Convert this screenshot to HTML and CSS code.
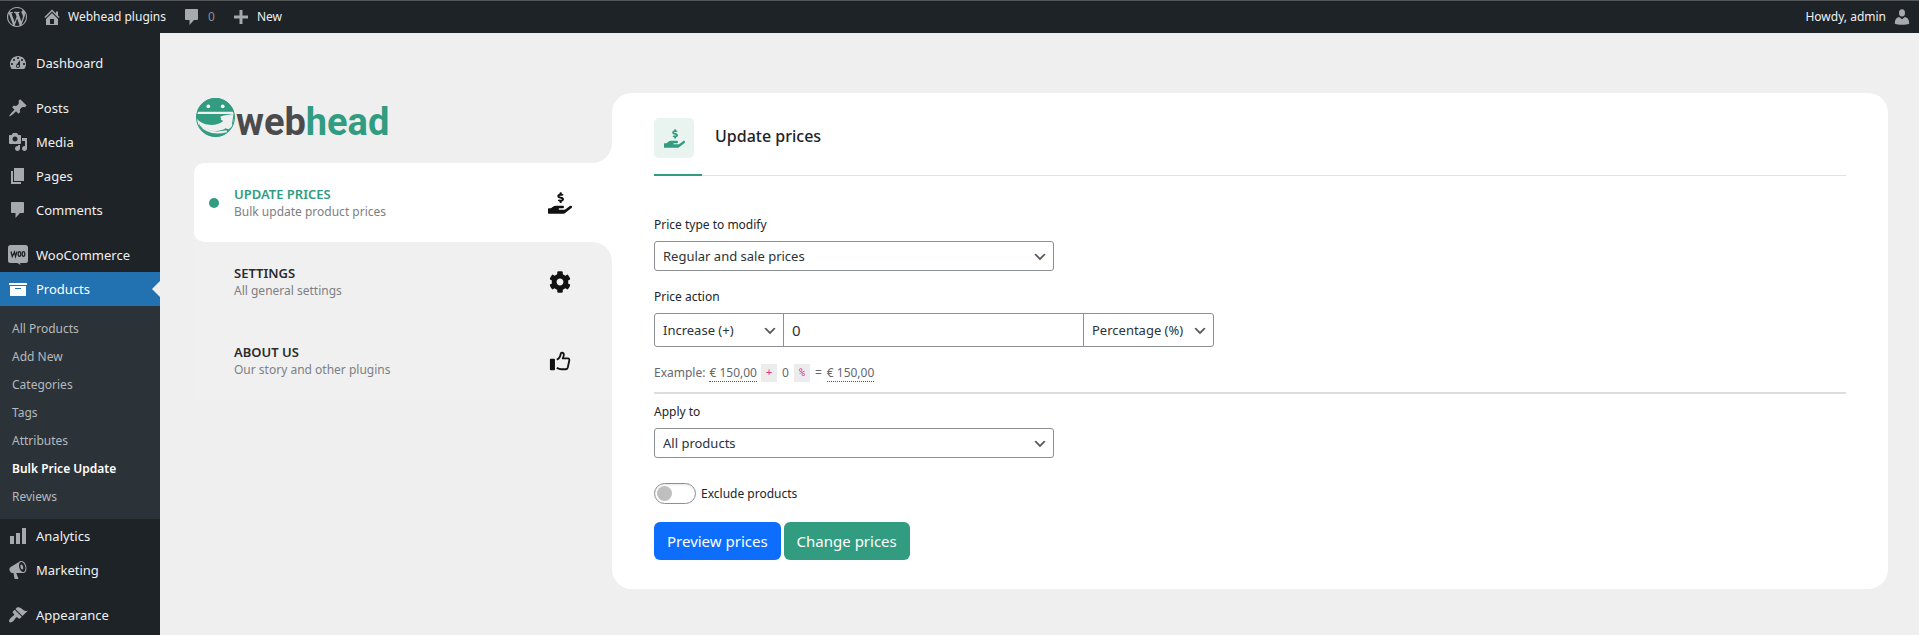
FILE: index.html
```html
<!DOCTYPE html>
<html lang="en">
<head>
<meta charset="utf-8">
<title>Bulk Price Update</title>
<link rel="stylesheet" href="styles.css">
</head>
<body>
<header class="adminbar">
  <a class="bar-item" href="#" aria-label="About WordPress"><svg class="icon" viewBox="0 0 20 20"><path d="M20 10c0-5.51-4.49-10-10-10C4.48 0 0 4.49 0 10c0 5.52 4.48 10 10 10 5.51 0 10-4.48 10-10zM7.78 15.37L4.37 6.22c.55-.02 1.17-.08 1.17-.08.5-.06.44-1.13-.06-1.11 0 0-1.45.11-2.37.11-.18 0-.37 0-.58-.01C4.12 2.69 6.87 1.11 10 1.11c2.33 0 4.45.87 6.05 2.34-.68-.11-1.65.39-1.65 1.58 0 .74.45 1.36.9 2.1.35.61.55 1.36.55 2.46 0 1.49-1.4 5-1.4 5l-3.03-8.37c.54-.02.82-.17.82-.17.5-.05.44-1.25-.06-1.22 0 0-1.44.12-2.38.12-.87 0-2.33-.12-2.33-.12-.5-.03-.56 1.2-.06 1.22l.92.08 1.26 3.41zM17.41 10c.24-.64.74-1.87.43-4.25.7 1.29 1.05 2.71 1.05 4.25 0 3.29-1.73 6.24-4.4 7.78.97-2.59 1.94-5.2 2.92-7.78zM6.1 18.09C3.12 16.65 1.11 13.53 1.11 10c0-1.3.23-2.48.72-3.59C3.25 10.3 4.67 14.2 6.1 18.09zm4.03-6.63l2.58 6.98c-.86.29-1.76.45-2.71.45-.79 0-1.57-.11-2.29-.33.81-2.38 1.62-4.74 2.42-7.1z"/></svg></a>
  <a class="bar-item" href="#"><svg class="icon" viewBox="0 0 20 20"><path fill-rule="evenodd" d="M16 8.5l1.53 1.53-1.06 1.06L10 4.6l-6.47 6.49-1.06-1.06L10 2.5l4 4v-2h2v4zm-6-2.46l6 5.99V18H4v-5.97zM12 17v-5H8v5h4z"/></svg>Webhead plugins</a>
  <a class="bar-item bar-count" href="#"><svg class="icon" viewBox="0 0 20 20"><path d="M4 2h11c.6 0 1 .4 1 1v9c0 .6-.4 1-1 1h-3l-4.500 5v-5H4c-.6 0-1-.4-1-1V3c0-.6.4-1 1-1z"/></svg>0</a>
  <a class="bar-item" href="#"><svg class="icon" viewBox="0 0 20 20"><path d="M17 8.500v3h-5.500V17h-3v-5.500H3v-3h5.500V3h3v5.500z"/></svg>New</a>
  <a class="bar-item bar-user" href="#">Howdy, admin<svg class="icon" viewBox="0 0 20 20"><ellipse cx="10" cy="5.500" rx="3.300" ry="4"/><path d="M2 17.500c0-4.500 1.500-7 4.800-7.500L10 12.500l3.200-2.500c3.300.5 4.800 3 4.800 7.500-4 1.500-12 1.500-16 0z"/></svg></a>
</header>

<div class="shell">
  <nav class="menu" aria-label="Main menu">
    <a class="menu-item" href="#"><svg class="icon" viewBox="0 0 20 20"><path fill-rule="evenodd" d="M3.76 16h12.48c1.1-1.37 1.76-3.11 1.76-5 0-4.42-3.58-8-8-8s-8 3.580-8 8c0 1.890.66 3.630 1.760 5zM10 4c.55 0 1 .45 1 1s-.45 1-1 1-1-.45-1-1 .45-1 1-1zM6 6c.55 0 1 .45 1 1s-.45 1-1 1-1-.45-1-1 .45-1 1-1zm8 0c.55 0 1 .45 1 1s-.45 1-1 1-1-.45-1-1 .45-1 1-1zm-5.370 5.550L12 7v6c0 1.100-.9 2-2 2s-2-.9-2-2c0-.57.24-1.080.63-1.450zM4 10c.55 0 1 .45 1 1s-.45 1-1 1-1-.45-1-1 .45-1 1-1zm12 0c.55 0 1 .45 1 1s-.45 1-1 1-1-.45-1-1 .45-1 1-1zm-5 3c0-.55-.45-1-1-1s-1 .45-1 1 .45 1 1 1 1-.45 1-1z"/></svg>Dashboard</a>
    <a class="menu-item group-start" href="#"><svg class="icon" viewBox="0 0 20 20"><path d="M10.44 3.02l1.82-1.82 6.36 6.35-1.83 1.82c-1.05-.68-2.48-.57-3.41.36l-.75.75c-.92.93-1.04 2.35-.35 3.41l-1.83 1.82-2.41-2.41-2.8 2.79c-.42.42-3.38 2.71-3.8 2.29s1.86-3.39 2.28-3.81l2.79-2.79L4.1 9.36l1.83-1.82c1.05.69 2.48.57 3.4-.36l.75-.75c.93-.92 1.05-2.35.36-3.41z"/></svg>Posts</a>
    <a class="menu-item" href="#"><svg class="icon" viewBox="0 0 20 20"><path fill-rule="evenodd" d="M13 11V4c0-.55-.45-1-1-1h-1.67L9 1H5L3.67 3H2c-.55 0-1 .45-1 1v7c0 .55.45 1 1 1h10c.55 0 1-.45 1-1zM7 4.5c1.38 0 2.5 1.12 2.5 2.5S8.38 9.5 7 9.5 4.5 8.38 4.5 7 5.62 4.5 7 4.5zM14 6h5v10.5c0 1.38-1.12 2.5-2.5 2.5S14 17.88 14 16.5s1.12-2.5 2.5-2.5c.17 0 .34.02.5.05V9h-3V6zm-4 8.05V13h2v3.5c0 1.38-1.12 2.5-2.5 2.5S7 17.88 7 16.5 8.12 14 9.5 14c.17 0 .34.02.5.05z"/></svg>Media</a>
    <a class="menu-item" href="#"><svg class="icon" viewBox="0 0 20 20"><path d="M6 15V2h10v13H6zm-1 1h8v2H3V5h2v11z"/></svg>Pages</a>
    <a class="menu-item" href="#"><svg class="icon" viewBox="0 0 20 20"><path d="M4 2h11c.6 0 1 .4 1 1v9c0 .6-.4 1-1 1h-3l-4.500 5v-5H4c-.6 0-1-.4-1-1V3c0-.6.4-1 1-1z"/></svg>Comments</a>
    <a class="menu-item group-start" href="#"><svg class="icon" viewBox="0 0 20 20"><path d="M2.500 0h15A2.500 2.500 0 0 1 20 2.500v13a2.500 2.500 0 0 1-2.500 2.500H12l.5 2-3-2h-7A2.500 2.500 0 0 1 0 15.500v-13A2.500 2.500 0 0 1 2.500 0z"/><g class="woo-lines"><path d="M3 6.500l1.300 5L6.500 7l1 4.500L9 6.500"/><ellipse cx="11.500" cy="9" rx="1.300" ry="2.300"/><ellipse cx="15.500" cy="9" rx="1.300" ry="2.300"/></g></svg>WooCommerce</a>
    <a class="menu-item current" href="#"><svg class="icon" viewBox="0 0 20 20"><path fill-rule="evenodd" d="M19 4v2H1V4h18zM2 7h16v10H2V7zm11 3V9H7v1h6z"/></svg>Products</a>
    <div class="submenu">
      <a href="#">All Products</a>
      <a href="#">Add New</a>
      <a href="#">Categories</a>
      <a href="#">Tags</a>
      <a href="#">Attributes</a>
      <a class="sub-current" href="#">Bulk Price Update</a>
      <a href="#">Reviews</a>
    </div>
    <a class="menu-item" href="#"><svg class="icon" viewBox="0 0 20 20"><path d="M18 18V2h-4v16h4zm-6 0V7H8v11h4zm-6 0v-8H2v8h4z"/></svg>Analytics</a>
    <a class="menu-item" href="#"><svg class="icon" viewBox="0 0 20 20"><path fill-rule="evenodd" d="M18.15 5.94c.46 1.62.38 3.22-.02 4.48-.42 1.28-1.26 2.18-2.3 2.48-.16.06-.26.06-.4.06-.06.02-.12.02-.18.02-.06.02-.14.02-.22.02h-6.8l2.22 5.5c.02.14-.06.26-.14.34-.08.1-.24.16-.34.16H6.950c-.1 0-.26-.06-.34-.16-.08-.08-.16-.2-.14-.34l-1-5.500H4.250l-.02-.02c-.5.06-1.080-.18-1.540-.62s-.88-1.080-1.060-1.880c-.24-.8-.2-1.560-.02-2.200.18-.62.58-1.080 1.060-1.300l.02-.02 9-5.400c.3-.2.6-.35.98-.46 1.040-.3 2.240.1 3.220.98s1.840 2.240 2.260 3.860zM15.570 11.920c.4-.1.74-.34 1.020-.7.58-.7.86-1.760.86-3.040 0-.64-.1-1.300-.28-1.980-.34-1.360-1.020-2.500-1.780-3.240s-1.680-1.100-2.460-.88c-.82.22-1.400.96-1.700 2-.32 1.040-.28 2.360.06 3.720.38 1.360 1 2.500 1.800 3.240.78.74 1.620 1.100 2.480.88z"/><ellipse cx="13.800" cy="7" rx="1.300" ry="2.600" transform="rotate(-15 13.800 7)"/></svg>Marketing</a>
    <a class="menu-item group-start" href="#"><svg class="icon" viewBox="0 0 20 20"><path d="M14.48 11.06L7.41 3.99l1.5-1.5c.5-.56 2.3-.47 3.51.32 1.21.8 1.43 1.28 2.91 2.1 1.18.64 2.45 1.26 4.45.85zm-.71.71L6.7 4.7 4.93 6.47c-.39.39-.39 1.02 0 1.41l1.06 1.06c.39.39.39 1.03 0 1.42-.6.6-1.43 1.11-2.21 1.69-.35.26-.7.53-1.01.84C1.43 14.23.4 16.08 1.4 17.07c.99 1 2.84-.03 4.18-1.36.31-.31.58-.66.85-1.02.57-.78 1.08-1.61 1.69-2.21.39-.39 1.02-.39 1.41 0l1.06 1.06c.39.39 1.02.39 1.41 0z"/></svg>Appearance</a>
  </nav>

  <main class="page">
    <aside class="side">
      <div class="brand-back"><div class="brand">
        <svg class="brand-mark" viewBox="0 0 40 40"><circle cx="20" cy="20" r="18.500" fill="none" stroke="#319c7f" stroke-width="1"/><path fill="#319c7f" d="M2 14.500C5 6 12 1 20 1s15 5 18 13.500zM1.500 16.500H38c-5 .5-10 1-14 3 2 .5 2 1.500 1 2.500 1 1 3 1 2 2-6 4.500-18 5-25-2.500-.7-2-.7-3.500-.5-5z"/><path fill="#319c7f" d="M4 26c8 8 19 9 26 4.500l2.500 1 3-2C32 36 26 39 20 39 14 39 7 35 4 28.500z"/><path d="M5 26.500c6 8.500 15 9.500 26 7" fill="none" stroke="#efefef" stroke-width="2"/><path d="M38 17l-1.500 10" stroke="#319c7f" stroke-width="1"/><circle cx="13" cy="9" r="1.800" fill="#fff"/><circle cx="27" cy="9" r="1.800" fill="#fff"/></svg>
        <span class="brand-name">web<span class="brand-accent">head</span></span>
      </div></div>
      <nav class="tabs" aria-label="Plugin sections">
        <a class="tab tab-active" href="#">
          <span class="tab-dot"></span>
          <span class="tab-text"><strong>UPDATE PRICES</strong><span>Bulk update product prices</span></span>
          <svg class="tab-icon" viewBox="0 0 576 512"><path id="hand" d="M271.06,144.3l54.27,14.3a8.59,8.59,0,0,1,6.63,8.1c0,4.6-4.09,8.4-9.12,8.4h-35.6a30,30,0,0,1-11.19-2.2c-5.24-2.2-11.28-1.7-15.3,2l-19,17.5a11.68,11.68,0,0,0-2.25,2.66,11.42,11.42,0,0,0,3.88,15.74,83.77,83.77,0,0,0,34.51,11.5V240c0,8.8,7.83,16,17.37,16h17.37c9.55,0,17.38-7.2,17.38-16V222.4c32.93-3.6,57.84-31,53.5-63-3.15-23-22.46-41.3-46.56-47.7L282.68,97.4a8.59,8.59,0,0,1-6.63-8.1c0-4.6,4.09-8.4,9.12-8.4h35.6A30,30,0,0,1,332,83.1c5.23,2.2,11.28,1.7,15.3-2l19-17.5A11.31,11.31,0,0,0,368.47,61a11.43,11.43,0,0,0-3.84-15.78,83.82,83.82,0,0,0-34.52-11.5V16c0-8.8-7.82-16-17.37-16H295.37C285.82,0,278,7.2,278,16V33.6c-32.89,3.6-57.85,31-53.51,63C227.63,119.6,247,137.9,271.06,144.3ZM565.27,328.1c-11.8-10.7-30.2-10-42.6,0L430.27,402a63.64,63.64,0,0,1-40,14H272a16,16,0,0,1,0-32h78.29c15.9,0,30.71-10.9,33.25-26.6a31.2,31.2,0,0,0,.46-5.46A32,32,0,0,0,352,320H192a117.66,117.66,0,0,0-74.1,26.29L71.4,384H16A16,16,0,0,0,0,400v96a16,16,0,0,0,16,16H372.77a64,64,0,0,0,40-14L564,377a32,32,0,0,0,1.28-48.9Z"/></svg>
        </a>
        <div class="tabs-back"><div class="tabs-rest">
          <a class="tab" href="#">
            <span class="tab-text"><strong>SETTINGS</strong><span>All general settings</span></span>
            <svg class="tab-icon" viewBox="0 0 512 512"><path d="M487.4 315.7l-42.6-24.6c4.3-23.2 4.3-47 0-70.2l42.6-24.6c4.9-2.8 7.1-8.6 5.5-14-11.1-35.6-30-67.8-54.7-94.6-3.8-4.1-10-5.1-14.8-2.3L380.8 110c-17.9-15.4-38.5-27.3-60.8-35.1V25.8c0-5.6-3.9-10.5-9.4-11.7-36.7-8.2-74.3-7.8-109.2 0-5.5 1.2-9.4 6.1-9.4 11.7V75c-22.2 7.9-42.8 19.8-60.8 35.1L88.7 85.5c-4.9-2.8-11-1.9-14.8 2.3-24.7 26.7-43.6 58.9-54.7 94.6-1.7 5.4.6 11.2 5.5 14L67.3 221c-4.3 23.2-4.3 47 0 70.2l-42.6 24.6c-4.9 2.8-7.1 8.6-5.5 14 11.1 35.6 30 67.8 54.7 94.6 3.8 4.1 10 5.1 14.8 2.3l42.6-24.6c17.9 15.4 38.5 27.3 60.8 35.1v49.2c0 5.6 3.9 10.5 9.4 11.7 36.7 8.2 74.3 7.8 109.2 0 5.5-1.2 9.4-6.1 9.4-11.7v-49.2c22.2-7.9 42.8-19.8 60.8-35.1l42.6 24.6c4.9 2.8 11 1.9 14.8-2.3 24.7-26.7 43.6-58.9 54.7-94.6 1.5-5.5-.7-11.3-5.6-14.1zM256 336c-44.1 0-80-35.9-80-80s35.9-80 80-80 80 35.9 80 80-35.9 80-80 80z"/></svg>
          </a>
          <a class="tab" href="#">
            <span class="tab-text"><strong>ABOUT US</strong><span>Our story and other plugins</span></span>
            <svg class="tab-icon" viewBox="0 0 24 24"><rect x="1" y="9.500" width="5.500" height="12.500" rx="1"/><path d="M8.500 10.500c2.500-1 4-3.500 4.300-6.500.2-1.500 3.200-1.500 3.400.8.1 1.700-.7 3-1.200 4.400h5.500c1.700 0 2 1.500 1.500 2.800L20.500 19c-.4 1.500-1.200 2-2.500 2h-4.500c-2 0-3.500-.7-5-1.500" fill="none" stroke="currentColor" stroke-width="2" stroke-linejoin="round"/></svg>
          </a>
        </div></div>
      </nav>
    </aside>

    <section class="panel">
      <div class="panel-head">
        <span class="panel-badge"><svg class="badge-icon" viewBox="0 0 576 512"><use href="#hand"/></svg></span>
        <h1 class="panel-title">Update prices</h1>
      </div>
      <form class="form">
        <div class="field field-first">
          <label for="type">Price type to modify</label>
          <select id="type" class="select"><option>Regular and sale prices</option></select>
        </div>
        <div class="field">
          <label for="amount">Price action</label>
          <div class="input-group">
            <select class="select group-select" aria-label="Action"><option>Increase (+)</option></select>
            <input id="amount" class="group-input" type="text" value="0">
            <select class="select group-select" aria-label="Unit"><option>Percentage (%)</option></select>
          </div>
        </div>
        <p class="example">Example: <span class="price">€ 150,00</span><code>+</code><span class="number">0</span><code>%</code><span class="number">=</span><span class="price">€ 150,00</span></p>
        <div class="field field-apply">
          <label for="apply">Apply to</label>
          <select id="apply" class="select"><option>All products</option></select>
        </div>
        <div class="toggle-row">
          <input id="exclude" class="toggle" type="checkbox"><label for="exclude">Exclude products</label>
        </div>
        <div class="actions">
          <button class="btn" type="button">Preview prices</button>
          <button class="btn btn-green" type="button">Change prices</button>
        </div>
      </form>
    </section>
  </main>
</div>
</body>
</html>
```
FILE: styles.css
```css
* { box-sizing: border-box; }

body {
  margin: 0;
  min-height: 100vh;
  display: flex;
  flex-direction: column;
  background: #efefef;
  color: #212529;
  font-family: "Noto Sans", "Open Sans", sans-serif;
  font-size: 12px;
  line-height: 18px;
}

a { color: inherit; text-decoration: none; }

.icon { width: 20px; height: 20px; flex: none; fill: #a7aaad; }

/* Top bar */
.adminbar {
  display: flex;
  align-items: center;
  gap: 16px;
  height: 33px;
  padding: 0 7px;
  border-top: 1px solid #55585a;
  background: #1d2327;
  color: #f0f0f1;
}
.bar-item { display: flex; align-items: center; gap: 6px; }
.bar-item:first-child { margin-right: -1px; }
.bar-count { color: #8c8f94; }
.bar-user { margin-left: auto; }
.bar-user .icon { height: 18px; }

.shell { flex: 1; display: flex; }

/* Left menu */
.menu {
  flex: none;
  width: 160px;
  padding-top: 13px;
  background: #1d2327;
  color: #f0f0f1;
  font-size: 13px;
}
.menu-item {
  display: flex;
  align-items: center;
  gap: 8px;
  height: 34px;
  padding-left: 8px;
}
.group-start { margin-top: 11px; }
.current { position: relative; background: #2271b1; color: #fff; }
.current .icon { fill: #fff; }
.current::after {
  content: "";
  position: absolute;
  right: 0;
  top: 9px;
  border: 8px solid transparent;
  border-right-color: #efefef;
  border-left-width: 0;
}
.woo-lines { fill: none; stroke: #1d2327; stroke-width: 1.3; }
.submenu {
  padding: 9px 0 8px 12px;
  background: #2c3338;
  color: #b4b9be;
  font-size: 12px;
}
.submenu a { display: block; line-height: 28px; }
.submenu .sub-current { color: #fff; font-weight: 600; }

/* Page */
.page {
  flex: 1;
  display: flex;
  align-items: flex-start;
  padding: 60px 31px 46px 34px;
}
.side { flex: none; width: 418px; }

.brand-back { background: #fff; }
.brand {
  display: flex;
  align-items: flex-start;
  height: 70px;
  padding: 4px 0 0 1px;
  background: #efefef;
  border-bottom-right-radius: 20px;
}
.brand-mark { width: 41px; height: 41px; }
.brand-name {
  color: #4b4b4d;
  font-family: Roboto, sans-serif;
  font-size: 38px;
  font-weight: 700;
  line-height: 50px;
}
.brand-accent { color: #319c7f; }

.tab {
  display: flex;
  align-items: center;
  justify-content: space-between;
  height: 79px;
  padding: 0 40px;
}
.tab-active {
  position: relative;
  background: #fff;
  border-radius: 10px 0 0 10px;
}
.tab-dot {
  position: absolute;
  left: 15px;
  top: 35px;
  width: 10px;
  height: 10px;
  border-radius: 50%;
  background: #319c7f;
}
.tab-text { display: flex; flex-direction: column; color: #7c8085; }
.tab-text strong { color: #2c2c2e; font-size: 13px; font-weight: 600; }
.tab-text .tab-active strong,
.tab-active .tab-text strong { color: #319c7f; }
.tab-icon { width: 24px; height: 22px; color: #111; fill: currentColor; }
.tabs-back { background: linear-gradient(90deg, #efefef 50%, #fff 50%); }
.tabs-rest { background: #f0f0f0; border-top-right-radius: 20px; }

/* Panel */
.panel {
  flex: 1;
  min-width: 0;
  padding: 25px 42px 29px;
  background: #fff;
  border-radius: 20px;
}
.panel-head {
  position: relative;
  display: flex;
  align-items: flex-start;
  gap: 21px;
  padding-bottom: 17px;
  border-bottom: 1px solid #e0e2e3;
}
.panel-head::after {
  content: "";
  position: absolute;
  left: 0;
  bottom: -1px;
  width: 48px;
  height: 2px;
  background: #319c7f;
}
.panel-badge {
  display: grid;
  place-items: center;
  width: 40px;
  height: 40px;
  border-radius: 5px;
  background: #e9f4f1;
}
.badge-icon { width: 21px; height: 19px; fill: #319c7f; }
.panel-title { margin: 0; color: #1d2327; font-size: 16px; font-weight: 500; line-height: 36px; }

.field { display: flex; flex-direction: column; align-items: flex-start; gap: 7px; margin-top: 17px; }
.field-first { margin-top: 40px; }
.field-apply { margin-top: 0; padding-top: 9px; border-top: 2px solid #dddddf; }

.select {
  appearance: none;
  width: 400px;
  max-width: 100%;
  height: 30px;
  padding: 0 24px 0 8px;
  border: 1px solid #8c8f94;
  border-radius: 3px;
  background: #fff url("data:image/svg+xml,%3Csvg xmlns='http://www.w3.org/2000/svg' viewBox='0 0 20 20'%3E%3Cpath d='M5 6l5 5 5-5 2 1-7 7-7-7 2-1z' fill='%23555'/%3E%3C/svg%3E") no-repeat right 5px top 55% / 16px 16px;
  color: #2c3338;
  font: 13px "Noto Sans", "Open Sans", sans-serif;
}
.input-group { display: flex; width: 560px; max-width: 100%; }
.group-select { width: 131px; height: 34px; }
.group-select:first-child { width: 130px; border-radius: 3px 0 0 3px; }
.group-select:last-child { border-radius: 0 3px 3px 0; }
.group-input {
  flex: 1;
  min-width: 0;
  margin: 0 -1px;
  padding: 0 8px;
  border: 1px solid #8c8f94;
  color: #2c3338;
  font: 15px "Noto Sans", "Open Sans", sans-serif;
}

.example { display: flex; align-items: center; gap: 4px; margin: 17px 0 10px; color: #62686e; }
.price { line-height: 16px; border-bottom: 1px dotted #50575e; }
.example code {
  padding: 0 5px;
  background: #ececec;
  color: #d63384;
  font: 10px/18px "DejaVu Sans Mono", monospace;
}
.number { padding: 0 1px; }

.toggle-row { display: flex; align-items: center; gap: 5px; margin-top: 25px; }
.toggle {
  appearance: none;
  display: flex;
  align-items: center;
  width: 42px;
  height: 21px;
  margin: 0;
  padding: 0 2px;
  border: 1px solid #8c8f94;
  border-radius: 11px;
  background: #fff;
  box-shadow: inset 0 1px 2px rgba(0, 0, 0, .1);
}
.toggle::before { content: ""; width: 15px; height: 15px; border-radius: 50%; background: #bfbfbf; }

.actions { display: flex; gap: 3px; margin-top: 18px; }
.btn {
  height: 38px;
  padding: 0 12px;
  border: 1px solid transparent;
  border-radius: 6px;
  background: #0d6efd;
  color: #fff;
  font: 15px "Noto Sans", "Open Sans", sans-serif;
}
.btn-green { background: #319c7f; }
```
